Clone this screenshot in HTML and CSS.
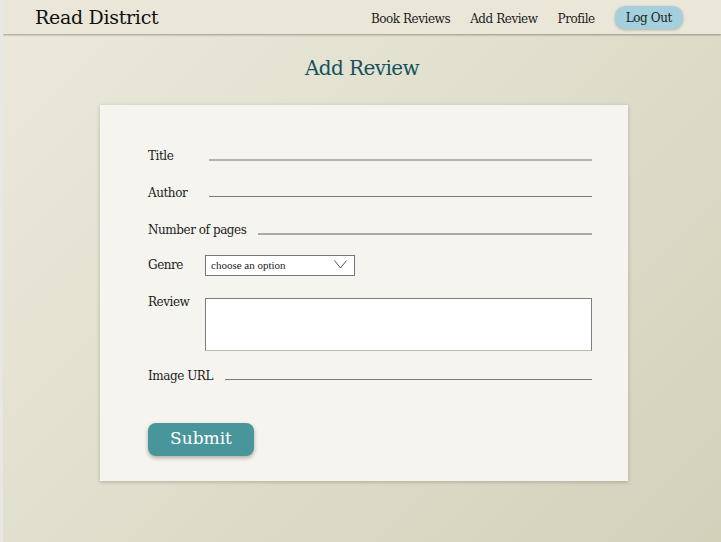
FILE: index.html
```html
<!DOCTYPE html>
<html lang="en">
<head>
<meta charset="utf-8">
<title>Read District - Add Review</title>
<link rel="stylesheet" href="styles.css">
</head>
<body>
<header class="topbar">
  <div class="brand">Read District</div>
  <nav class="nav">
    <a class="nav-link" href="#">Book Reviews</a>
    <a class="nav-link" href="#">Add Review</a>
    <a class="nav-link" href="#">Profile</a>
    <button class="logout" type="button">Log Out</button>
  </nav>
</header>
<main class="main">
  <h1 class="page-title">Add Review</h1>
  <form class="card">
    <div class="row">
      <label class="label">Title</label>
      <input class="line line-light" type="text">
    </div>
    <div class="row">
      <label class="label">Author</label>
      <input class="line" type="text">
    </div>
    <div class="row">
      <label class="label">Number of pages</label>
      <input class="line line-num" type="text">
    </div>
    <div class="row row-genre">
      <label class="label">Genre</label>
      <div class="select-wrap">
        <select class="select">
          <option>choose an option</option>
        </select>
        <svg class="chevron" width="13" height="9" viewBox="0 0 13 9"><polyline points="0.5,0.5 6.5,8 12.5,0.5" fill="none" stroke="#555" stroke-width="1"/></svg>
      </div>
    </div>
    <div class="row row-top">
      <label class="label">Review</label>
      <textarea class="textarea"></textarea>
    </div>
    <div class="row row-url">
      <label class="label">Image URL</label>
      <input class="line" type="text">
    </div>
    <div class="actions">
      <button class="submit" type="submit">Submit</button>
    </div>
  </form>
</main>
</body>
</html>
```
FILE: styles.css
```css
html {
  background: #e8e8e2;
}
body {
  margin: 0 0 0 3px;
  min-height: 542px;
  background: linear-gradient(135deg, #ece9dc 0%, #e1dfcd 45%, #d2d2bb 100%);
  font-family: "DejaVu Serif", serif;
  color: #1c1c1c;
}
.topbar {
  height: 34px;
  box-sizing: border-box;
  display: flex;
  align-items: center;
  justify-content: space-between;
  padding: 0 38px 0 32px;
  background: #eae7d9;
  box-shadow: 0 1px 2px rgba(0, 0, 0, 0.35);
  position: relative;
}
.brand {
  font-size: 19px;
  color: #111;
  letter-spacing: -0.3px;
}
.nav {
  display: flex;
  align-items: center;
  gap: 20px;
}
.nav-link {
  font-size: 12px;
  letter-spacing: -0.45px;
  color: #1c1c1c;
  text-decoration: none;
  padding-top: 3px;
}
.logout {
  font-family: "DejaVu Serif", serif;
  font-size: 12px;
  letter-spacing: -0.4px;
  color: #1c1c1c;
  background: #a3d0dc;
  border: none;
  border-radius: 10px;
  height: 23px;
  padding: 2px 11px 0;
  box-shadow: 0 1px 3px rgba(0, 0, 0, 0.25);
}
.main {
  display: flex;
  flex-direction: column;
  align-items: center;
  padding-bottom: 40px;
}
.page-title {
  margin: 21px 0 24px;
  font-size: 20px;
  letter-spacing: -0.6px;
  font-weight: normal;
  color: #14525d;
  line-height: 26px;
}
.card {
  width: 528px;
  box-sizing: border-box;
  background: #f5f4ee;
  box-shadow: 0 1px 4px rgba(0, 0, 0, 0.22);
  padding: 40px 36px 25px 48px;
  margin-left: 4px;
  display: flex;
  flex-direction: column;
  gap: 15px;
}
.row {
  display: flex;
  align-items: center;
  height: 22px;
}
.row-genre {
  height: 21px;
  margin-top: -2px;
}
.row-top {
  align-items: flex-start;
  height: auto;
  margin-top: 8px;
}
.row-url {
  margin-top: -1px;
}
.label {
  flex: none;
  min-width: 57px;
  box-sizing: border-box;
  padding-right: 8px;
  font-size: 12px;
  letter-spacing: -0.45px;
  color: #1c1c1c;
}
.row-top .label {
  margin-top: -3px;
}
.line {
  flex: 1;
  align-self: flex-start;
  margin-left: 4px;
  height: 15px;
  box-sizing: border-box;
  background: transparent;
  border: none;
  border-bottom: 1px solid #7a7a76;
  padding: 0;
  outline: none;
}
.line-light {
  height: 16px;
  border-bottom: 2px solid #b4b4af;
}
.line-num {
  height: 16px;
  border-bottom: 2px solid #a9a9a5;
}
.select-wrap {
  position: relative;
  width: 150px;
  height: 21px;
}
.select {
  appearance: none;
  -webkit-appearance: none;
  width: 150px;
  height: 21px;
  box-sizing: border-box;
  border: 1px solid #777;
  border-radius: 0;
  background: #fff;
  font-family: "Liberation Serif", serif;
  font-size: 11px;
  color: #222;
  padding: 0 5px;
}
.chevron {
  position: absolute;
  right: 8px;
  top: 6px;
  pointer-events: none;
}
.textarea {
  flex: 1;
  height: 53px;
  box-sizing: border-box;
  border: 1px solid #7d7d7d;
  border-bottom-color: #b8b8b4;
  background: #fff;
  resize: none;
  margin: 0;
}
.actions {
  margin-top: 21px;
  display: flex;
}
.submit {
  width: 106px;
  height: 33px;
  border: none;
  border-radius: 8px;
  background: #48969b;
  color: #fff;
  font-family: "DejaVu Serif", serif;
  font-size: 17px;
  padding: 0 0 3px;
  box-shadow: 0 2px 4px rgba(0, 0, 0, 0.3);
}
```
